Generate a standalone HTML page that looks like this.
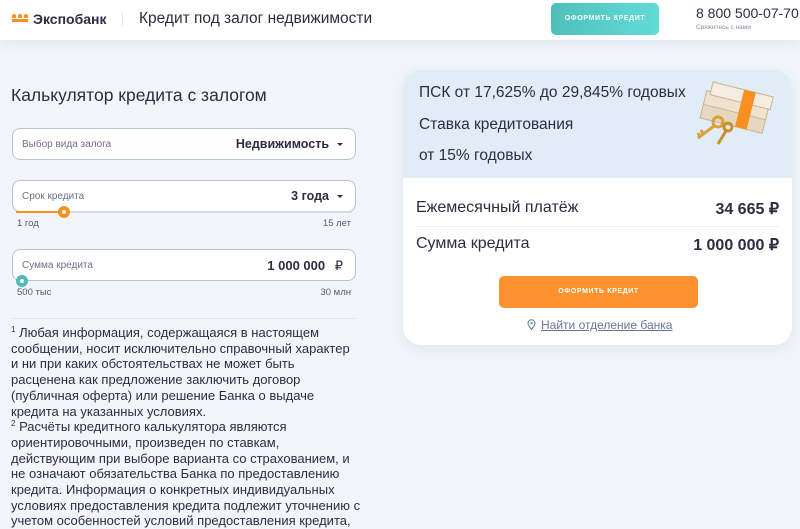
<!DOCTYPE html>
<html style="width:800px;height:529px;overflow:hidden"><head><meta charset="utf-8"><style>
*{box-sizing:border-box;margin:0;padding:0}
body{width:800px;height:529px;overflow:hidden;background:#f2f6fa;font-family:"Liberation Sans",sans-serif;color:#2b2d42;position:relative}
.hdr{position:absolute;left:0;top:0;width:800px;height:40px;background:#fff;box-shadow:0 4px 10px rgba(200,210,225,.35)}
.abs{position:absolute}
.field{position:absolute;left:12px;width:344px;height:32px;background:#fff;border:1px solid #b9c3d8;border-radius:8px}
.field .l{position:absolute;left:9px;top:10px;font-size:10px;color:#6b7185}
.field .v{position:absolute;right:12px;top:8px;font-size:12.5px;font-weight:bold;color:#2b2d42}
.car{display:inline-block;width:0;height:0;border-left:3px solid transparent;border-right:3px solid transparent;border-top:3px solid #2b2d42;margin-left:8px;vertical-align:middle}
.sm{font-size:9.5px;color:#555a6e}
.foot{position:absolute;left:11px;top:325px;font-size:13px;line-height:15.7px;color:#2b2d42;white-space:nowrap;letter-spacing:0}
.foot sup{font-size:8px;line-height:0;vertical-align:0;position:relative;top:-5px}
.card{position:absolute;left:403px;top:70px;width:389px;height:275px;background:#fff;border-radius:18px;overflow:hidden;box-shadow:0 4px 14px rgba(190,200,220,.35)}
.top{position:absolute;left:0;top:0;width:389px;height:108px;background:#e1ecf7}
.t15{font-size:15.5px;color:#2b2d42}
.row{position:absolute;left:13px;right:13px;font-size:16px;display:flex;justify-content:space-between}
</style></head><body>
<div class="hdr">
 <div class="abs" style="left:12px;top:14px;width:16px;height:8px">
  <div class="abs" style="left:0;top:0;width:4px;height:4px;background:#f7901e;border-radius:2px 2px 0 0"></div>
  <div class="abs" style="left:6px;top:0;width:4px;height:4px;background:#f7901e;border-radius:2px 2px 0 0"></div>
  <div class="abs" style="left:12px;top:0;width:4px;height:4px;background:#f7901e;border-radius:2px 2px 0 0"></div>
  <div class="abs" style="left:0;top:5px;width:16px;height:3px;background:#f7901e"></div>
 </div>
 <div class="abs" style="left:33px;top:11px;font-size:14px;font-weight:bold;color:#2b2d42">Экспобанк</div>
 <div class="abs" style="left:122px;top:12px;width:1px;height:14px;background:#e4e7ee"></div>
 <div class="abs" style="left:139px;top:10px;font-size:15.5px;color:#2b2d42">Кредит под залог недвижимости</div>
 <div class="abs" style="left:551px;top:3px;width:108px;height:32px;border-radius:5px;background:linear-gradient(90deg,#4fc0b9,#62dcd8);color:#fff;font-size:7px;font-weight:bold;letter-spacing:.6px;text-align:center;line-height:32px">ОФОРМИТЬ КРЕДИТ</div>
 <div class="abs" style="left:696px;top:5px;font-size:14px;color:#2b2d42">8 800 500-07-70</div>
 <div class="abs" style="left:696px;top:24px;font-size:6.5px;color:#8a8fa0">Свяжитесь с нами</div>
</div>

<div class="abs" style="left:11px;top:85px;font-size:17.5px;color:#2b2d42">Калькулятор кредита с залогом</div>

<div class="field" style="top:128px"><span class="l">Выбор вида залога</span><span class="v">Недвижимость<span class="car"></span></span></div>
<div class="field" style="top:180px"><span class="l">Срок кредита</span><span class="v">3 года<span class="car"></span></span></div>
<div class="abs" style="left:16px;top:211px;width:336px;height:2px;background:#d5dbe7"></div>
<div class="abs" style="left:16px;top:211px;width:48px;height:2px;background:#f7901e"></div>
<div class="abs" style="left:58px;top:206px;width:12px;height:12px;border-radius:50%;background:#f7901e"><div style="margin:4px;width:4px;height:4px;border-radius:50%;background:#fff"></div></div>
<div class="abs sm" style="left:17px;top:218px">1 год</div>
<div class="abs sm" style="right:449px;top:218px">15 лет</div>

<div class="field" style="top:249px"><span class="l">Сумма кредита</span><span class="v" style="font-size:13px">1 000 000 <span style="font-weight:normal;margin-left:6px">₽</span></span></div>
<div class="abs" style="left:16px;top:275px;width:12px;height:12px;border-radius:50%;background:#4fbdb5"><div style="margin:4px;width:4px;height:4px;border-radius:50%;background:#fff"></div></div>
<div class="abs sm" style="left:17px;top:287px">500 тыс</div>
<div class="abs sm" style="right:449px;top:287px">30 млн</div>

<div class="abs" style="left:12px;top:318px;width:345px;height:1px;background:#e3e7ee"></div>
<div class="foot"><sup>1</sup> Любая информация, содержащаяся в настоящем<br>сообщении, носит исключительно справочный характер<br>и ни при каких обстоятельствах не может быть<br>расценена как предложение заключить договор<br>(публичная оферта) или решение Банка о выдаче<br>кредита на указанных условиях.<br><sup>2</sup> Расчёты кредитного калькулятора являются<br>ориентировочными, произведен по ставкам,<br>действующим при выборе варианта со страхованием, и<br>не означают обязательства Банка по предоставлению<br>кредита. Информация о конкретных индивидуальных<br>условиях предоставления кредита подлежит уточнению с<br>учетом особенностей условий предоставления кредита,</div>

<div class="card">
 <div class="top">
  <div class="abs t15" style="left:16px;top:14px">ПСК от 17,625% до 29,845% годовых</div>
  <div class="abs t15" style="left:16px;top:46px">Ставка кредитования</div>
  <div class="abs t15" style="left:16px;top:77px">от 15% годовых</div>
  <svg class="abs" style="left:285px;top:10px" width="92" height="68" viewBox="0 0 92 68">
   <g transform="rotate(14 46 34)">
    <rect x="14" y="30" width="64" height="16" fill="#e6d8c0" stroke="#c9b595"/>
    <rect x="14" y="18" width="64" height="14" fill="#efe3d0" stroke="#c9b595"/>
    <rect x="18" y="8" width="62" height="13" fill="#f5ece0" stroke="#c9b595"/>
    <rect x="50" y="8" width="12" height="38" fill="#f7901e"/>
   </g>
   <circle cx="30" cy="42" r="5" fill="none" stroke="#d9a23a" stroke-width="3"/>
   <path d="M26 46 L10 58 M15 54 l-2 -4 M12 57 l-2 -4" stroke="#d9a23a" stroke-width="3" fill="none"/>
   <circle cx="40" cy="47" r="4" fill="none" stroke="#c98f2a" stroke-width="3"/>
   <path d="M38 51 L30 64" stroke="#c98f2a" stroke-width="3"/>
  </svg>
 </div>
 <div class="row" style="top:129px"><span>Ежемесячный платёж</span><b>34 665 ₽</b></div>
 <div class="abs" style="left:13px;top:156px;width:363px;height:1px;background:#eef0f4"></div>
 <div class="row" style="top:165px"><span>Сумма кредита</span><b>1 000 000 ₽</b></div>
 <div class="abs" style="left:96px;top:206px;width:199px;height:32px;border-radius:5px;background:#ff9230;color:#fff;font-size:7px;font-weight:bold;letter-spacing:.6px;text-align:center;line-height:32px">ОФОРМИТЬ КРЕДИТ</div>
 <div class="abs" style="left:124px;top:248px;font-size:12px;color:#6b7392;text-decoration:underline">
  <svg width="9" height="11" viewBox="0 0 9 11" style="vertical-align:-1px;margin-right:5px"><path d="M4.5 10.5C2 7.5 1 6 1 4.3a3.5 3.5 0 0 1 7 0C8 6 7 7.5 4.5 10.5z" fill="none" stroke="#6b7392"/><circle cx="4.5" cy="4.3" r="1.3" fill="#4fbdb5"/></svg>Найти отделение банка</div>
</div>
</body></html>
